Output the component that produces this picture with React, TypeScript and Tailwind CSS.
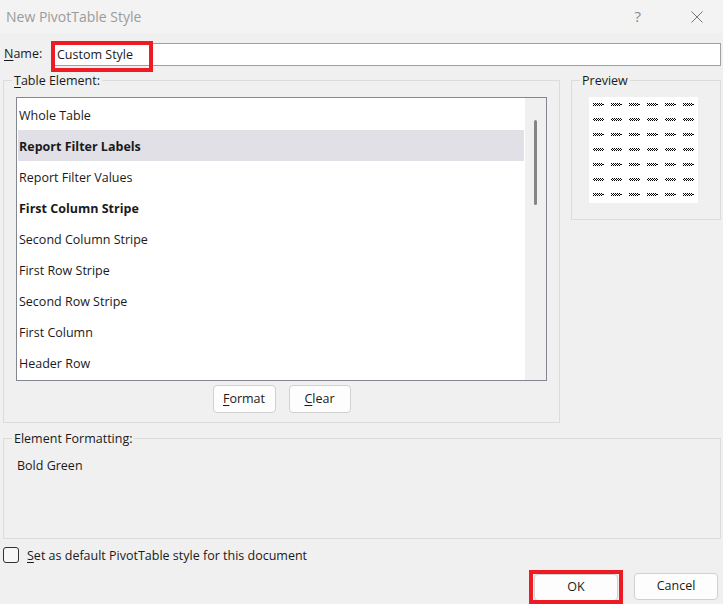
import type { ReactNode } from 'react';

const font = { fontFamily: '"Segoe UI", "Open Sans", "Noto Sans", sans-serif' };

const elements = [
  { label: 'Whole Table', bold: false },
  { label: 'Report Filter Labels', bold: true, selected: true },
  { label: 'Report Filter Values', bold: false },
  { label: 'First Column Stripe', bold: true },
  { label: 'Second Column Stripe', bold: false },
  { label: 'First Row Stripe', bold: false },
  { label: 'Second Row Stripe', bold: false },
  { label: 'First Column', bold: false },
  { label: 'Header Row', bold: false },
];

function Mnemonic({ first, rest }: { first: string; rest: string }) {
  return (
    <>
      <span className="underline underline-offset-2">{first}</span>
      {rest}
    </>
  );
}

function Group({ title, className, children }: { title: ReactNode; className: string; children: ReactNode }) {
  return (
    <fieldset className={`border border-[#dcdcdc] ${className}`}>
      <legend className="ml-[8px] px-[2px] pt-[1px] text-[12.5px] leading-[16px] text-[#1a1a1a]">{title}</legend>
      {children}
    </fieldset>
  );
}

function DlgButton({ children, className = '' }: { children: ReactNode; className?: string }) {
  return (
    <button className={`rounded-[4px] border border-[#d0d0d0] bg-[#fdfdfd] text-[12.5px] text-[#1a1a1a] ${className}`}>
      {children}
    </button>
  );
}

function PreviewGrid() {
  const cols = [0, 1, 2, 3, 4, 5];
  const rows = [0, 1, 2, 3, 4, 5, 6];
  return (
    <svg width="109" height="106" viewBox="0 0 109 106" shapeRendering="crispEdges">
      <defs>
        <pattern id="chk" width="2" height="2" patternUnits="userSpaceOnUse">
          <rect x="0" y="0" width="1" height="1" fill="#000" />
          <rect x="1" y="1" width="1" height="1" fill="#000" />
        </pattern>
      </defs>
      <rect width="109" height="106" fill="#fff" />
      {rows.map((r) =>
        cols.map((c) => (
          <g key={`${r}-${c}`}>
            <rect x={4 + c * 18} y={6 + r * 15} width="10" height="3" fill="url(#chk)" />
            <rect x={14 + c * 18} y={7 + r * 15} width="1" height="1" fill="#000" />
          </g>
        )),
      )}
    </svg>
  );
}

export default function App() {
  return (
    <div style={font} className="flex h-[604px] w-[723px] flex-col overflow-hidden bg-[#f0f0f0] text-[#1a1a1a]">
      {/* title bar */}
      <div className="flex h-[33px] items-center bg-[#f3f3f3] pl-[6px]">
        <span className="flex-1 text-[14px] text-[#9b9b9b]">New PivotTable Style</span>
        <span className="mr-[50px] text-[15px] text-[#8a8a8a]">?</span>
        <svg width="12" height="12" viewBox="0 0 12 12" className="mr-[20px]">
          <path d="M0.5 0.5 L11.5 11.5 M11.5 0.5 L0.5 11.5" stroke="#777" strokeWidth="1" />
        </svg>
      </div>

      <div className="flex flex-col pl-[3px] pr-[2px]">
        {/* name row */}
        <div className="mt-[10px] flex h-[23px] items-center">
          <span className="w-[49px] pl-[1px] text-[12.5px]">
            <Mnemonic first="N" rest="ame:" />
          </span>
          <div className="relative flex h-[23px] flex-1 items-center border border-[#a0a0a0] bg-white pl-[4px] pt-[2px] text-[12.5px]">
            Custom Style
            <div className="pointer-events-none absolute left-[-2px] top-[-3px] h-[31px] w-[102px] border-[4px] border-[#ed1c24]" />
          </div>
        </div>

        {/* middle section */}
        <div className="mt-[6px] flex items-start">
          <Group title={<Mnemonic first="T" rest="able Element:" />} className="w-[557px]">
            <div className="px-[12px] pb-[9px]">
              <div className="mt-[8px] flex h-[284px] border border-[#828790] bg-white">
                <div className="flex flex-1 flex-col p-[1px]">
                  {elements.map((el) => (
                    <div
                      key={el.label}
                      className={`flex h-[31px] items-center pl-[1px] pt-[3px] text-[12.5px] ${el.bold ? 'font-bold' : ''} ${el.selected ? 'bg-[#e0e0e6]' : ''}`}
                    >
                      {el.label}
                    </div>
                  ))}
                </div>
                <div className="flex w-[21px] justify-center bg-[#f0f0f0] pt-[22px]">
                  <div className="h-[85px] w-[3px] rounded-full bg-[#858585]" />
                </div>
              </div>
              <div className="mt-[4px] flex justify-center gap-[13px]">
                <DlgButton className="h-[28px] w-[63px]">
                  <Mnemonic first="F" rest="ormat" />
                </DlgButton>
                <DlgButton className="h-[28px] w-[62px]">
                  <Mnemonic first="C" rest="lear" />
                </DlgButton>
              </div>
            </div>
          </Group>

          <Group title="Preview" className="ml-[11px] h-[148px] w-[150px]">
            <div className="mt-[8px] pl-[17px]">
              <PreviewGrid />
            </div>
          </Group>
        </div>

        {/* element formatting */}
        <Group title="Element Formatting:" className="mt-[7px] h-[109px] w-full">
          <div className="mt-[10px] pl-[13px] text-[12.5px]">Bold Green</div>
        </Group>

        {/* checkbox */}
        <div className="mt-[7px] flex h-[18px] items-center">
          <div className="h-[16px] w-[16px] rounded-[3px] border border-[#333] bg-[#f7f7f7]" />
          <span className="ml-[8px] pt-[2px] text-[12.5px]">
            <Mnemonic first="S" rest="et as default PivotTable style for this document" />
          </span>
        </div>

        {/* dialog buttons */}
        <div className="mt-[9px] flex justify-end gap-[16px] pr-[3px]">
          <div className="relative">
            <DlgButton className="h-[27px] w-[84px]">OK</DlgButton>
            <div className="pointer-events-none absolute left-[-5px] top-[-3px] h-[34px] w-[94px] border-[4px] border-[#ed1c24]" />
          </div>
          <DlgButton className="h-[27px] w-[84px]">Cancel</DlgButton>
        </div>
      </div>
    </div>
  );
}
